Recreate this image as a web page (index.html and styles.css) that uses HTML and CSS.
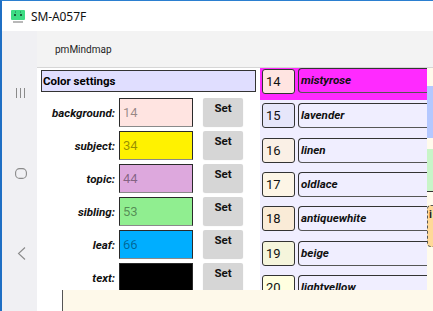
FILE: index.html
```html
<!DOCTYPE html>
<html>
<head>
<meta charset="utf-8">
<link rel="stylesheet" href="styles.css">
</head>
<body>
<div class="win">
  <div class="titlebar">
    <svg class="appicon" width="14" height="14" viewBox="0 0 14 14">
      <rect x="0" y="0" width="14" height="10" rx="1" fill="#3ddc84"/>
      <rect x="3" y="4" width="2" height="2" fill="#1b5e3a"/>
      <rect x="9" y="4" width="2" height="2" fill="#1b5e3a"/>
      <rect x="4" y="1" width="1" height="2" fill="#2aa866"/>
      <rect x="9" y="1" width="1" height="2" fill="#2aa866"/>
      <rect x="2" y="11" width="10" height="2" fill="#b8b8b8"/>
    </svg>
    <span class="title">SM-A057F</span>
  </div>
  <div class="main">
    <nav class="navbar">
      <svg class="nav-recent" width="11" height="10" viewBox="0 0 11 10">
        <rect x="1" y="0" width="1" height="10" fill="#8a8a8a"/>
        <rect x="5" y="0" width="1" height="10" fill="#8a8a8a"/>
        <rect x="9" y="0" width="1" height="10" fill="#8a8a8a"/>
      </svg>
      <svg class="nav-home" width="12" height="11" viewBox="0 0 12 11">
        <rect x="0.6" y="0.6" width="10.8" height="9.8" rx="4" fill="none" stroke="#8a8a8a" stroke-width="1.1"/>
      </svg>
      <svg class="nav-back" width="11" height="13" viewBox="0 0 11 13">
        <path d="M9 0.5 L2.5 6.5 L9 12.5" fill="none" stroke="#8a8a8a" stroke-width="1.1"/>
      </svg>
    </nav>
    <div class="app">
      <header class="appbar">pmMindmap</header>
      <div class="content">
        <section class="settings">
          <div class="settings-head">Color settings</div>
          <div class="srow">
            <span class="slabel">background:</span>
            <span class="sbox c-bg">14</span>
            <span class="sbtn">Set</span>
          </div>
          <div class="srow">
            <span class="slabel">subject:</span>
            <span class="sbox c-subject">34</span>
            <span class="sbtn">Set</span>
          </div>
          <div class="srow">
            <span class="slabel">topic:</span>
            <span class="sbox c-topic">44</span>
            <span class="sbtn">Set</span>
          </div>
          <div class="srow">
            <span class="slabel">sibling:</span>
            <span class="sbox c-sibling">53</span>
            <span class="sbtn">Set</span>
          </div>
          <div class="srow">
            <span class="slabel">leaf:</span>
            <span class="sbox c-leaf">66</span>
            <span class="sbtn">Set</span>
          </div>
          <div class="srow">
            <span class="slabel">text:</span>
            <span class="sbox c-text"></span>
            <span class="sbtn">Set</span>
          </div>
        </section>
        <section class="palette">
          <div class="plist">
            <div class="pitem selected">
              <span class="pnum" style="background:#ffe4e1">14</span>
              <span class="pname">mistyrose</span>
            </div>
            <div class="pitem">
              <span class="pnum" style="background:#e6e6fa">15</span>
              <span class="pname">lavender</span>
            </div>
            <div class="pitem">
              <span class="pnum" style="background:#faf0e6">16</span>
              <span class="pname">linen</span>
            </div>
            <div class="pitem">
              <span class="pnum" style="background:#fdf5e6">17</span>
              <span class="pname">oldlace</span>
            </div>
            <div class="pitem">
              <span class="pnum" style="background:#faebd7">18</span>
              <span class="pname">antiquewhite</span>
            </div>
            <div class="pitem">
              <span class="pnum" style="background:#f5f5dc">19</span>
              <span class="pname">beige</span>
            </div>
            <div class="pitem">
              <span class="pnum" style="background:#ffffe0">20</span>
              <span class="pname">lightyellow</span>
            </div>
          </div>
          <div class="canvas">
            <div class="node node-blue"></div>
            <div class="node node-green"></div>
            <div class="node node-orange">i</div>
          </div>
        </section>
      </div>
      <div class="sheet"></div>
    </div>
  </div>
</div>
</body>
</html>
```

FILE: styles.css
```css
* { box-sizing: border-box; }
html, body { margin: 0; padding: 0; }
body {
  width: 433px;
  height: 311px;
  overflow: hidden;
  background: #ffffff;
  font-family: Roboto, "Noto Sans", sans-serif;
}
.win {
  width: 433px;
  height: 311px;
  border-left: 2px solid #1f6fc4;
  border-top: 1px solid #2b7fd0;
  display: flex;
  flex-direction: column;
  overflow: hidden;
}
.titlebar {
  height: 30px;
  flex: none;
  background: #ffffff;
  display: flex;
  align-items: center;
  padding-left: 9px;
}
.appicon { display: block; margin-right: 6px; margin-top: 1px; }
.title {
  font-family: "Noto Sans", "Open Sans", sans-serif;
  font-size: 12px;
  color: #111;
  letter-spacing: -0.1px;
}
.main {
  flex: 1;
  display: flex;
  min-height: 0;
}
.navbar {
  width: 35px;
  flex: none;
  background: #f0f0f3;
  display: flex;
  flex-direction: column;
  align-items: flex-start;
  padding-left: 13px;
  padding-top: 57px;
}
.navbar svg { display: block; }
.nav-home { margin-top: 70px; }
.nav-back { margin-top: 68px; margin-left: 1px; }
.app {
  flex: 1;
  display: flex;
  flex-direction: column;
  min-width: 0;
}
.appbar {
  height: 37px;
  flex: none;
  background: #f3f3f3;
  border-bottom: 1px solid #d6d6d6;
  padding-left: 18px;
  font-size: 10px;
  line-height: 37px;
  color: #1e1e1e;
}
.content {
  height: 222px;
  flex: none;
  display: flex;
  overflow: hidden;
}
.settings {
  width: 223px;
  flex: none;
  background: #ffffff;
  padding: 2px 4px 0 4px;
}
.settings-head {
  height: 22px;
  border: 1px solid #333;
  background: #e0deff;
  font-weight: 700;
  font-size: 11.5px;
  line-height: 20px;
  padding-left: 1px;
  color: #000;
  margin-bottom: 6px;
}
.srow {
  display: grid;
  grid-template-columns: 74px 74px 46px;
  column-gap: 4px;
  height: 29px;
  margin-bottom: 4px;
}
.slabel {
  text-align: right;
  font-weight: 700;
  font-style: italic;
  font-size: 11.6px;
  line-height: 30px;
  color: #111;
  white-space: nowrap;
}
.sbox {
  height: 29px;
  border: 1px solid #2a2a2a;
  border-bottom-color: #8a8a8a;
  font-size: 13px;
  line-height: 28px;
  padding-left: 3px;
  color: rgba(0, 0, 0, 0.42);
}
.c-bg { background: #ffe4e1; }
.c-subject { background: #fff200; }
.c-topic { background: #dda8dd; }
.c-sibling { background: #90ee90; }
.c-leaf { background: #00aeff; }
.c-text { background: #000000; }
.sbtn {
  margin-left: 6px;
  height: 28px;
  background: #d6d6d6;
  border-radius: 2px;
  box-shadow: 0 1px 1px rgba(0, 0, 0, 0.18);
  text-align: center;
  font-weight: 700;
  font-size: 11.5px;
  line-height: 15px;
  padding-top: 3px;
  color: #111;
}
.palette {
  flex: 1;
  display: flex;
  min-width: 0;
}
.plist {
  width: 167px;
  flex: none;
  background: #f0eeff;
  overflow: hidden;
}
.pitem {
  height: 32px;
  margin-bottom: 2.33px;
  display: flex;
  align-items: flex-start;
  padding: 1px 0 0 2px;
}
.pitem.selected {
  background: #ff2aff;
  padding-top: 0;
}
.pitem.selected .pnum { margin-top: 1px; }
.pnum {
  width: 33px;
  height: 25px;
  flex: none;
  border: 1px solid #333;
  border-radius: 3px;
  font-size: 13px;
  line-height: 23px;
  padding-left: 3px;
  color: #111;
}
.pname {
  flex: none;
  width: 140px;
  height: 25px;
  margin-left: 3px;
  border-top: 1px solid #333;
  border-left: 1px solid #333;
  border-bottom: 1px solid #555;
  border-radius: 4px 0 0 4px;
  font-weight: 700;
  font-style: italic;
  font-size: 11.6px;
  line-height: 23px;
  padding-left: 2px;
  color: #111;
}
.canvas {
  flex: 1;
  position: relative;
  background: #fffbec;
  overflow: hidden;
}
.node { position: absolute; left: 0; width: 20px; }
.node-blue { top: 18px; height: 52px; background: #b4c8ff; }
.node-green { top: 81px; height: 43px; background: #c8f5c8; border-bottom: 1px solid #333; }
.node-orange {
  top: 137px;
  height: 42px;
  background: #ffd998;
  border: 1px dashed #555;
  border-radius: 4px;
  font-weight: 700;
  font-size: 11px;
  line-height: 14px;
  padding: 2px 0 0 1px;
  color: #222;
}
.sheet {
  height: 21px;
  flex: none;
  margin-left: 25px;
  background: #fef9ea;
  border-left: 1px solid #555;
}
```
